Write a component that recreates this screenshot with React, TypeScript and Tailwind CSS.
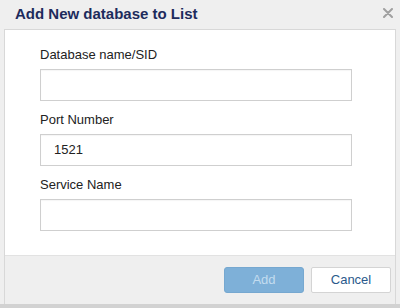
import React from "react";

function Field({ label, value }: { label: string; value?: string }) {
  return (
    <div className="flex flex-col">
      <div className="text-[13px] leading-[16px] text-[#222222] h-[16px]">{label}</div>
      <div className="mt-[6px] h-[32px] w-[312px] border border-[#cfcfcf] bg-white flex items-center px-[13px] text-[13px] text-[#222222] shadow-[inset_0_1px_1px_rgba(0,0,0,0.04)]">
        {value}
      </div>
    </div>
  );
}

export default function App() {
  return (
    <div
      className="w-[400px] h-[308px] bg-[#efefef] flex flex-col overflow-hidden"
      style={{ fontFamily: '"Liberation Sans", Arial, sans-serif' }}
    >
      <div className="h-[29px] flex items-start justify-between pl-[15px] pr-[7px] pt-[6px] shrink-0">
        <div className="text-[15px] font-bold text-[#1d2b5c] leading-[15px]">Add New database to List</div>
        <svg width="10" height="10" viewBox="0 0 10 10" className="mt-[2px]">
          <path d="M1 1 L9 9 M9 1 L1 9" stroke="#a0a0a0" strokeWidth="2" strokeLinecap="round" />
        </svg>
      </div>
      <div className="mx-[4px] border-l border-r border-t border-[#d8d8d8] flex flex-col flex-1">
        <div className="bg-white h-[226px] pl-[35px] pt-[17px] flex flex-col gap-[11px] border-b border-[#e2e2e2]">
          <Field label="Database name/SID" />
          <Field label="Port Number" value="1521" />
          <Field label="Service Name" />
        </div>
        <div className="flex-1 flex justify-end items-start pt-[11px] pr-[4px] gap-[7px]">
          <button className="w-[80px] h-[26px] rounded-[3px] bg-[#7eb0d8] border border-[#76a8d0] text-[13px] text-[#c3dcef]">
            Add
          </button>
          <button className="w-[80px] h-[26px] rounded-[2px] bg-white border border-[#d4d4d4] text-[13px] text-[#2a5a8c]">
            Cancel
          </button>
        </div>
      </div>
      <div className="h-[4px] bg-[#d2d2d2] shrink-0" />
    </div>
  );
}
